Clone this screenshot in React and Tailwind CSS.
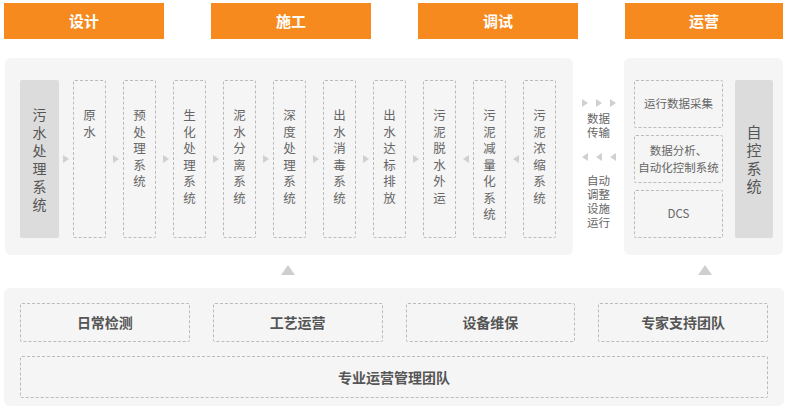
const F = { fontFamily: '"Noto Sans CJK SC", sans-serif' };

function V({ t, cls = "" }) {
  return (
    <div className={"flex flex-col items-center " + cls}>
      {t.split("").map((c, i) => <span key={i}>{c}</span>)}
    </div>
  );
}

const cols = ["原水", "预处理系统", "生化处理系统", "泥水分离系统", "深度处理系统", "出水消毒系统", "出水达标排放", "污泥脱水外运", "污泥减量化系统", "污泥浓缩系统"];
const dirs = ["r", "r", "r", "r", "r", "r", "r", "r", "l", "l"];

function Tri({ d }) {
  return d === "r" ? (
    <div className="w-0 h-0 border-y-[4px] border-y-transparent border-l-[6px] border-l-[#d0d0d0]" />
  ) : (
    <div className="w-0 h-0 border-y-[4px] border-y-transparent border-r-[6px] border-r-[#d0d0d0]" />
  );
}

export default function App() {
  return (
    <div style={F} className="w-[788px] h-[413px] bg-white relative text-[#666]">
      <div className="flex pt-[3px] pl-[4px] gap-[47px]">
        {["设计", "施工", "调试", "运营"].map((t, i) => (
          <div key={t} className={"h-[36px] bg-[#f68a1e] text-white font-bold text-[15px] flex items-center justify-center " + (i === 3 ? "w-[158px]" : "w-[160px]")}>{t}</div>
        ))}
      </div>
      <div className="flex mt-[19px] pl-[5px] h-[197px]">
        <div className="w-[568px] bg-[#f5f5f5] rounded-[6px] flex items-start pt-[22px] pl-[15px]">
          <div className="w-[39px] h-[158px] bg-[#dcdcdc] rounded-[2px] flex items-center justify-center text-[14px] leading-[18px] text-[#555]">
            <V t="污水处理系统" />
          </div>
          {cols.map((c, i) => (
            <div key={c} className="flex items-center h-[158px]">
              <div className="w-[14px] flex justify-center"><Tri d={dirs[i]} /></div>
              <div className="w-[33px] h-[158px] border border-dashed border-[#bbb] rounded-[2px] pt-[26px] text-[12.5px] leading-[16.5px]">
                <V t={c} />
              </div>
              {i < cols.length - 1 && <div className="w-[3px]" />}
            </div>
          ))}
        </div>
        <div className="w-[51px] flex flex-col items-center pt-[41px] text-[11.5px] leading-[14px]">
          <div className="flex gap-[8px] mb-[4px]"><Tri d="r" /><Tri d="r" /><Tri d="r" /></div>
          <div>数据</div><div>传输</div>
          <div className="flex gap-[8px] mt-[14px] mb-[12px]"><Tri d="l" /><Tri d="l" /><Tri d="l" /></div>
          <div>自动</div><div>调整</div><div>设施</div><div>运行</div>
        </div>
        <div className="w-[159px] bg-[#f5f5f5] rounded-[6px] flex pt-[22px] pl-[10px] gap-[12px]">
          <div className="w-[89px] flex flex-col gap-[7px] text-[11.5px]">
            <div className="h-[48px] border border-dashed border-[#bbb] rounded-[2px] flex items-center justify-center">运行数据采集</div>
            <div className="h-[48px] border border-dashed border-[#bbb] rounded-[2px] flex flex-col items-center justify-center leading-[17px] whitespace-nowrap"><div>数据分析、</div><div>自动化控制系统</div></div>
            <div className="h-[48px] border border-dashed border-[#bbb] rounded-[2px] flex items-center justify-center">DCS</div>
          </div>
          <div className="w-[38px] h-[158px] bg-[#dcdcdc] rounded-[2px] flex items-center justify-center text-[15px] leading-[18px] text-[#555]">
            <V t="自控系统" />
          </div>
        </div>
      </div>
      <div className="h-[33px] relative">
        <div className="absolute left-[281px] top-[10px] w-0 h-0 border-x-[7px] border-x-transparent border-b-[10px] border-b-[#cfcfcf]" />
        <div className="absolute left-[698px] top-[10px] w-0 h-0 border-x-[7px] border-x-transparent border-b-[10px] border-b-[#cfcfcf]" />
      </div>
      <div className="ml-[4px] w-[780px] h-[118px] bg-[#f5f5f5] rounded-[6px] px-[16px] pt-[15px] flex flex-col gap-[14px] text-[14px] font-bold text-[#555]">
        <div className="flex gap-[23px]">
          {["日常检测", "工艺运营", "设备维保", "专家支持团队"].map(t => (
            <div key={t} className="flex-1 h-[39px] border border-dashed border-[#bbb] rounded-[2px] flex items-center justify-center">{t}</div>
          ))}
        </div>
        <div className="h-[42px] border border-dashed border-[#bbb] rounded-[2px] flex items-center justify-center">专业运营管理团队</div>
      </div>
    </div>
  );
}
